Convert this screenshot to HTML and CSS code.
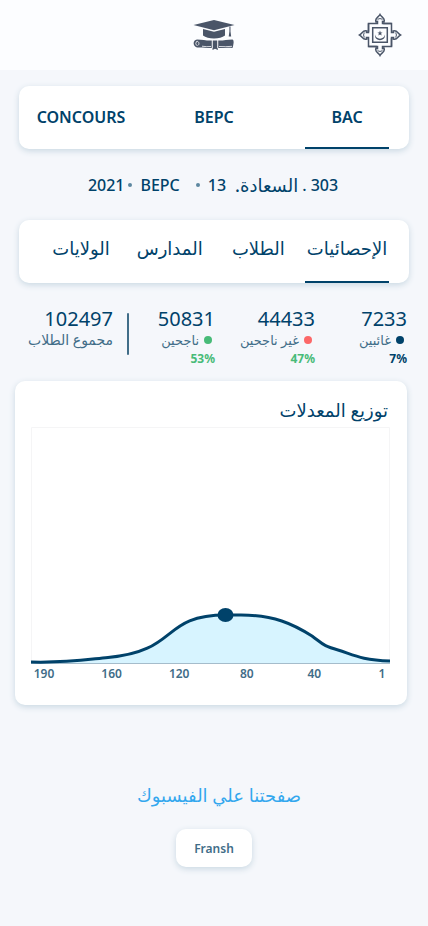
FILE: index.html
```html
<!DOCTYPE html>
<html lang="ar" dir="rtl">
<head>
<meta charset="utf-8">
<meta name="viewport" content="width=device-width, initial-scale=1">
<title>BAC</title>
<link rel="stylesheet" href="styles.css">
</head>
<body>
<header class="header">
  <svg class="emblem" viewBox="0 0 44 44" aria-hidden="true">
    <g fill="none" stroke="#4a5568">
      <path stroke-width="1.500" d="M14.700 14.700H29.300V29.300H14.700Z"/>
      <g id="leaf" stroke-width="1.500">
        <path d="M10.500 18.800V10.500H19.500V8.500L18 8.800C16.300 5 20.500 4.500 22 1.500C23.500 4.500 27.700 5 26 8.800L24.500 8.500V10.500H33.500"/>
        <path stroke-width="1" d="M19.500 6.300Q22 4.800 24.500 6.300"/>
      </g>
      <use href="#leaf" transform="rotate(90 22 22)"/>
      <use href="#leaf" transform="rotate(180 22 22)"/>
      <use href="#leaf" transform="rotate(270 22 22)"/>
    </g>
    <path fill="#4a5568" d="M17 21.500C17.500 27 26.500 27 27 21.500C28 29 16 29 17 21.500ZM22 17.500L22.700 19.400H24.600L23.100 20.600L23.700 22.500L22 21.400L20.300 22.500L20.900 20.600L19.400 19.400H21.300Z"/>
  </svg>
  <svg class="cap" viewBox="0 0 42 30" aria-hidden="true">
    <g fill="#4a5568">
      <path d="M21 0L41.500 5L21 10.200L.5 5Z"/>
      <path d="M10 9L21 11.800L32 9V15.500Q28 18.500 21 18.500T10 15.500Z"/>
      <path d="M36.400 6.500H37.500V11.500L38.200 16.500H35.700L36.400 11.500Z"/>
      <path d="M4 19.500C10 19.500 14 21 19 20.500V28C14 28.500 10 27 4 27.500C-.5 26.500-.5 20 4 19.500ZM25 20.500C29 21 34 19.500 39.500 19.500Q41 20 40.500 23.500T39.500 28C34 27 29 28.500 25 28Z"/>
      <path d="M19.500 20.500H24.500V27.500L25 30L22 28.700L19.500 30Z"/>
    </g>
    <path fill="none" stroke="#fcfdff" stroke-width=".8" d="M3.500 21.500C6 20.500 7 25 4.500 25.500M3.500 21.500Q2 23.500 3.500 25.500M9 26.200Q14 27 18 26.500M26 26.500Q33 27 39 26.300M19.200 20V28M24.800 20V28"/>
  </svg>
</header>
<main class="main">
  <nav class="tabs">
    <button class="tab tab-active" type="button">BAC</button>
    <button class="tab" type="button">BEPC</button>
    <button class="tab" type="button">CONCOURS</button>
  </nav>
  <div class="candidate" dir="ltr">
    <span>2021</span><i class="sep"></i><span>BEPC</span><i class="sep sep-wide"></i><span>13</span>
    <span class="place" dir="rtl">السعادة.</span><span>. 303</span>
  </div>
  <nav class="tabs tabs-ar">
    <button class="tab tab-active" type="button">الإحصائيات</button>
    <button class="tab" type="button">الطلاب</button>
    <button class="tab" type="button">المدارس</button>
    <button class="tab" type="button">الولايات</button>
  </nav>
  <section class="stats">
    <div class="stat"><span class="num">7233</span><span class="label"><i class="dot"></i>غائبين</span><b class="pct">7%</b></div>
    <div class="stat stat-fail"><span class="num">44433</span><span class="label"><i class="dot"></i>غير ناجحين</span><b class="pct">47%</b></div>
    <div class="stat stat-pass"><span class="num">50831</span><span class="label"><i class="dot"></i>ناجحين</span><b class="pct">53%</b></div>
    <div class="rule"></div>
    <div class="stat"><span class="num">102497</span><span class="label label-total">مجموع الطلاب</span></div>
  </section>
  <section class="card">
    <h2 class="card-title">توزيع المعدلات</h2>
    <svg class="chart" viewBox="0 0 359 237" preserveAspectRatio="none" role="img" aria-label="توزيع المعدلات">
      <path d="M.5 237V.5H358.500V237" fill="none" stroke="#f5f5f6"/>
      <path d="M0 235C35 236 56 232.500 77 230.500C149 224 129 188 195 188H210C243 188 262 197 281 209C292 217 292 219 307 223C323 228 330 233 359 234V237H0Z" fill="#d7f4ff"/>
      <path d="M0 236.500H359" stroke="#a5bccb"/>
      <path d="M0 235C35 236 56 232.500 77 230.500C149 224 129 188 195 188H210C243 188 262 197 281 209C292 217 292 219 307 223C323 228 330 233 359 234" fill="none" stroke="#00426a" stroke-width="3"/>
      <ellipse cx="194.500" cy="188" rx="8" ry="7" fill="#00426a"/>
    </svg>
    <div class="axis" dir="ltr"><span>190</span><span>160</span><span>120</span><span>80</span><span>40</span><span>1</span></div>
  </section>
  <a class="social" href="#">صفحتنا علي الفيسبوك</a>
  <button class="lang" type="button">Fransh</button>
</main>
</body>
</html>
```
FILE: styles.css
```css
* { box-sizing: border-box; }
body {
  margin: 0;
  min-height: 100vh;
  background: #f5f7fb;
  color: #00426a;
  font-family: "Noto Sans", "DejaVu Sans", sans-serif;
}
button { border: 0; background: none; font: inherit; color: inherit; padding: 0; cursor: pointer; }
.header {
  display: grid;
  grid-template-columns: 1fr auto 1fr;
  align-items: center;
  height: 70px;
  padding: 0 26px;
  background: #fcfdff;
}
.emblem { width: 44px; height: 44px; }
.cap { width: 42px; height: 30px; }
.main { display: flex; flex-direction: column; padding: 16px 19px 0; }
.tabs {
  display: flex;
  justify-content: space-between;
  height: 63px;
  padding: 0 20px;
  background: #fff;
  border-radius: 10px;
  box-shadow: 0 2px 6px #c9d8e2;
}
.tab {
  display: flex;
  justify-content: center;
  align-items: center;
  width: 84px;
  border-bottom: 2px solid transparent;
  font-size: 16px;
  font-weight: 600;
  white-space: nowrap;
}
.tab-active { border-bottom-color: #00426a; }
.tabs-ar .tab { font-size: 18px; font-weight: 400; padding-bottom: 5px; }
.candidate {
  display: flex;
  justify-content: center;
  align-items: center;
  height: 71px;
  padding-right: 2px;
  font-size: 16px;
  font-weight: 500;
  white-space: nowrap;
}
.sep { width: 4px; height: 4px; margin: 0 8px 0 4px; border-radius: 50%; background: #5d87a0; }
.sep-wide { margin-left: 16px; }
.place { margin: 0 4px 0 9px; font-size: 18px; }
.stats {
  display: grid;
  grid-template-columns: 92fr 100fr 86fr 2px 14px minmax(0, 83fr);
  margin: 22px 2px 0 11px;
  height: 76px;
}
.stat { display: flex; flex-direction: column; white-space: nowrap; }
.stat:last-child { grid-column: 6; }
.num { font-size: 20px; font-weight: 400; line-height: 27px; }
.label { display: flex; align-items: center; gap: 5px; font-size: 13px; line-height: 16px; color: #416d88; }
.label-total { font-size: 14px; }
.dot { width: 8px; height: 8px; margin-right: 3px; border-radius: 50%; background: #00426a; }
.pct { font-size: 12px; font-weight: 700; line-height: 22px; }
.stat-fail .dot { background: #fc6868; }
.stat-pass .dot { background: #48bb78; }
.stat-fail .pct, .stat-pass .pct { color: #48bb78; }
.rule { height: 42px; margin-top: 8px; border-radius: 1px; background: #416d88; }
.card {
  margin: 0 2px 0 -4px;
  padding: 16px 17px 21px 16px;
  background: #fff;
  border-radius: 10px;
  box-shadow: 0 2px 6px #c9d8e2;
}
.card-title { margin: 0 2px 4px 0; font-size: 18px; font-weight: 400; line-height: 26px; }
.chart { display: block; width: 100%; height: 237px; }
.axis {
  display: flex;
  justify-content: space-between;
  margin: 0 -3px 0 2px;
  font-size: 12px;
  font-weight: 600;
  line-height: 20px;
  color: #416d88;
}
.axis span { width: 22px; text-align: center; }
.social {
  align-self: center;
  margin: 77px 0 0 10px;
  font-size: 18px;
  line-height: 26px;
  color: #33a7ee;
  text-decoration: none;
}
.lang {
  align-self: center;
  width: 76px;
  height: 38px;
  margin: 21px 0 24px;
  border-radius: 10px;
  background: #fff;
  box-shadow: 0 2px 6px #c9d8e2;
  color: #416d88;
  font-size: 12px;
  font-weight: 600;
}
```
